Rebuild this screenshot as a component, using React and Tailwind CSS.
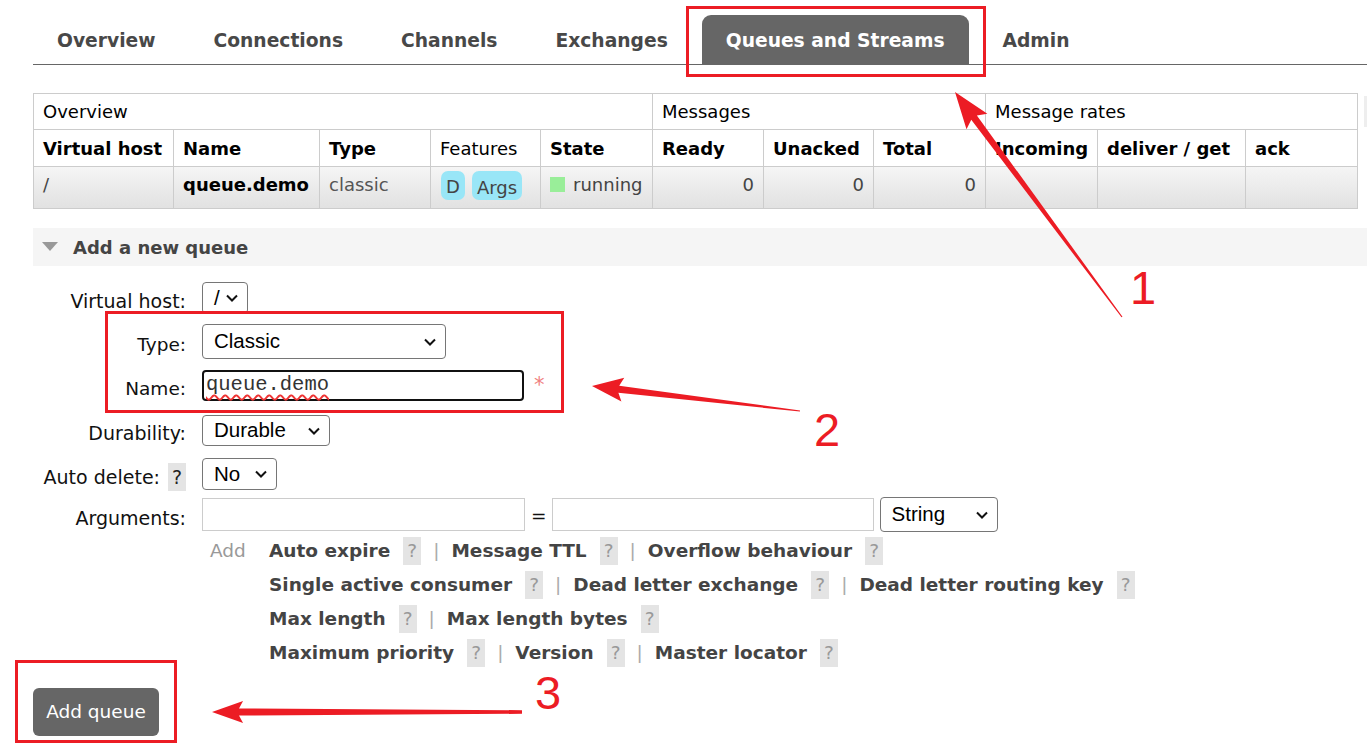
import React from "react";

const tabs = ["Overview", "Connections", "Channels", "Exchanges", "Queues and Streams", "Admin"];

const helpRows = [
  ["Auto expire", "Message TTL", "Overflow behaviour"],
  ["Single active consumer", "Dead letter exchange", "Dead letter routing key"],
  ["Max length", "Max length bytes"],
  ["Maximum priority", "Version", "Master locator"],
];

function Chevron() {
  return (
    <svg width="14" height="10" viewBox="0 0 14 10" className="shrink-0">
      <path d="M2 2.5 L7 7.5 L12 2.5" fill="none" stroke="#111" strokeWidth="2" />
    </svg>
  );
}

function Select({ value, w, h = "h-[32px]" }) {
  return (
    <div
      className={`${w} ${h} flex items-center justify-between pl-[11px] pr-[8px] border border-[#767676] rounded-[4px] bg-white text-[20.5px] text-black`}
      style={{ fontFamily: "'Liberation Sans', Arial, sans-serif" }}
    >
      <span>{value}</span>
      <Chevron />
    </div>
  );
}

function Help({ dark }) {
  return (
    <span
      className={`inline-flex items-center justify-center w-[18px] h-[28px] bg-[#e4e4e4] ${dark ? "text-[#222]" : "text-[#999]"} font-normal`}
    >
      ?
    </span>
  );
}

function arrowPoints(tx, ty, px, py, headLen, headW, tailW, shaftW) {
  const dx = px - tx;
  const dy = py - ty;
  const len = Math.hypot(dx, dy);
  const ux = dx / len;
  const uy = dy / len;
  const nx = -uy;
  const ny = ux;
  const bx = px - ux * headLen;
  const by = py - uy * headLen;
  const bbx = px - ux * headLen * 1.15;
  const bby = py - uy * headLen * 1.15;
  const pts = [
    [tx + nx * tailW, ty + ny * tailW],
    [bx + nx * shaftW, by + ny * shaftW],
    [bbx + nx * headW, bby + ny * headW],
    [px, py],
    [bbx - nx * headW, bby - ny * headW],
    [bx - nx * shaftW, by - ny * shaftW],
    [tx - nx * tailW, ty - ny * tailW],
  ];
  return pts.map((p) => p.join(",")).join(" ");
}

function Overlay() {
  return (
    <>
      <svg width="1367" height="745" className="absolute left-0 top-0 pointer-events-none">
        <rect x="687.5" y="7.5" width="297" height="68" fill="none" stroke="#ec1c24" strokeWidth="3" />
        <rect x="106.5" y="312.5" width="456" height="99" fill="none" stroke="#ec1c24" strokeWidth="3" />
        <rect x="16.5" y="661.5" width="159" height="80" fill="none" stroke="#ec1c24" strokeWidth="3" />
        <polygon points={arrowPoints(1122, 317, 955, 92, 32, 13, 0.6, 3.5)} fill="#ec1c24" />
        <polygon points={arrowPoints(800, 411, 592, 386, 27, 12, 0.6, 3.5)} fill="#ec1c24" />
        <polygon points={arrowPoints(522, 712, 212, 712, 27, 11, 1.8, 3.5)} fill="#ec1c24" />
      </svg>
      <div
        className="absolute left-[1130px] top-[264px] text-[47px] leading-none text-[#ec1c24]"
        style={{ fontFamily: "'Liberation Sans', Arial, sans-serif" }}
      >
        1
      </div>
      <div
        className="absolute left-[814px] top-[406px] text-[47px] leading-none text-[#ec1c24]"
        style={{ fontFamily: "'Liberation Sans', Arial, sans-serif" }}
      >
        2
      </div>
      <div
        className="absolute left-[535px] top-[669px] text-[47px] leading-none text-[#ec1c24]"
        style={{ fontFamily: "'Liberation Sans', Arial, sans-serif" }}
      >
        3
      </div>
    </>
  );
}

export default function App() {
  const cell = "border border-[#cccccc] px-[9px] text-left";
  const bodyCell = "border border-[#cccccc] px-[9px] text-left align-top pt-[4px]";
  return (
    <div
      className="relative w-[1367px] h-[745px] overflow-hidden bg-white text-[18px]"
      style={{ fontFamily: "'DejaVu Sans', Verdana, sans-serif" }}
    >
      {/* tabs */}
      <div className="ml-[33px] pt-[15px] flex border-b border-[#666]">
        {tabs.map((t) => (
          <div
            key={t}
            className={`h-[49px] px-[24px] mr-[10px] pt-[3px] flex items-center text-[18.7px] font-bold rounded-t-[9px] ${
              t === "Queues and Streams" ? "bg-[#666] text-white" : "text-[#484848]"
            }`}
          >
            {t}
          </div>
        ))}
      </div>

      {/* queue table */}
      <div className="flex mt-[28px] ml-[33px]">
        <table className="table-fixed border-collapse w-[1324px] text-black">
          <colgroup>
            {[140, 146, 111, 110, 112, 111, 110, 112, 112, 148, 112].map((w, i) => (
              <col key={i} style={{ width: w }} />
            ))}
          </colgroup>
          <thead>
            <tr className="h-[36px]">
              <th colSpan={5} className={`${cell} font-normal`}>Overview</th>
              <th colSpan={3} className={`${cell} font-normal`}>Messages</th>
              <th colSpan={3} className={`${cell} font-normal`}>Message rates</th>
            </tr>
            <tr className="h-[37px]">
              <th className={`${cell} font-bold`}>Virtual host</th>
              <th className={`${cell} font-bold`}>Name</th>
              <th className={`${cell} font-bold`}>Type</th>
              <th className={`${cell} font-normal`}>Features</th>
              <th className={`${cell} font-bold`}>State</th>
              <th className={`${cell} font-bold`}>Ready</th>
              <th className={`${cell} font-bold`}>Unacked</th>
              <th className={`${cell} font-bold`}>Total</th>
              <th className={`${cell} font-bold`}>Incoming</th>
              <th className={`${cell} font-bold`}>deliver / get</th>
              <th className={`${cell} font-bold`}>ack</th>
            </tr>
          </thead>
          <tbody>
            <tr className="h-[42px] bg-gradient-to-b from-[#f5f5f5] to-[#e1e1e1] text-[#444]">
              <td className={bodyCell}>/</td>
              <td className={`${bodyCell} font-bold text-black`}>queue.demo</td>
              <td className={`${bodyCell} text-[#555]`}>classic</td>
              <td className={bodyCell}>
                <div className="flex gap-[7px] pl-[1px]">
                  <span className="h-[29px] px-[5px] pt-[2px] flex items-center bg-[#99e6f7] rounded-[7px]">D</span>
                  <span className="h-[29px] px-[5px] pt-[3px] flex items-center bg-[#99e6f7] rounded-[7px]">Args</span>
                </div>
              </td>
              <td className={bodyCell}>
                <div className="flex items-center gap-[8px]">
                  <span className="w-[15px] h-[15px] bg-[#99ee99]" />
                  <span>running</span>
                </div>
              </td>
              <td className={`${bodyCell} text-right`}>0</td>
              <td className={`${bodyCell} text-right`}>0</td>
              <td className={`${bodyCell} text-right`}>0</td>
              <td className={bodyCell}></td>
              <td className={bodyCell}></td>
              <td className={bodyCell}></td>
            </tr>
          </tbody>
        </table>
        <div className="ml-[6px] mt-[3px] w-[6px] h-[31px] bg-[#eeeeee]" />
      </div>

      {/* add a new queue */}
      <div className="mt-[19px] ml-[33px] h-[38px] bg-[#f5f5f5] flex items-center">
        <svg width="16" height="10" viewBox="0 0 16 10" className="ml-[9px]">
          <polygon points="0,0 16,0 8,9" fill="#999" />
        </svg>
        <span className="ml-[15px] font-bold text-[#444]">Add a new queue</span>
      </div>

      <div className="text-[18.5px] text-[#111]">
        <div className="mt-[16px] flex items-center h-[32px]">
          <div className="w-[186px] text-right pt-[6px] text-[19px]">Virtual host:</div>
          <div className="ml-[16px]">
            <Select value="/" w="w-[46px]" />
          </div>
        </div>
        <div className="mt-[10px] flex items-center h-[35px]">
          <div className="w-[186px] text-right pt-[6px]">Type:</div>
          <div className="ml-[16px]">
            <Select value="Classic" w="w-[244px]" h="h-[35px]" />
          </div>
        </div>
        <div className="mt-[11px] flex items-center h-[31px]">
          <div className="w-[186px] text-right pt-[6px]">Name:</div>
          <div
            className="ml-[16px] w-[322px] h-[31px] border-2 border-[#111] rounded-[4px] pl-[2px] flex items-center text-[20.5px] text-[#333]"
            style={{ fontFamily: "'Liberation Mono', 'Courier New', monospace" }}
          >
            <span className="underline decoration-wavy decoration-[#e33] underline-offset-[4px]">queue.demo</span>
          </div>
          <span className="ml-[10px] text-[#f08080] text-[21px] leading-none">*</span>
        </div>
        <div className="mt-[14px] flex items-center h-[31px]">
          <div className="w-[186px] text-right pt-[6px] text-[19px]">Durability:</div>
          <div className="ml-[16px]">
            <Select value="Durable" w="w-[128px]" h="h-[31px]" />
          </div>
        </div>
        <div className="mt-[12px] flex items-center h-[32px]">
          <div className="w-[186px] flex justify-end items-center gap-[8px] pt-[6px] text-[19px]">
            <span>Auto delete:</span>
            <Help dark />
          </div>
          <div className="ml-[16px]">
            <Select value="No" w="w-[75px]" />
          </div>
        </div>
        <div className="mt-[8px] flex items-center h-[33px]">
          <div className="w-[186px] text-right pt-[8px] text-[19px]">Arguments:</div>
          <div className="ml-[16px] w-[323px] h-[33px] border border-[#cccccc]" />
          <span className="ml-[6px] mr-[5px] pt-[2px]">=</span>
          <div className="w-[322px] h-[33px] border border-[#cccccc]" />
          <div className="ml-[6px]">
            <Select value="String" w="w-[118px]" h="h-[35px]" />
          </div>
        </div>

        <div className="mt-[3px] ml-[210px] flex">
          <span className="text-[#999] pt-[3px] w-[59px]">Add</span>
          <div className="flex flex-col">
            {helpRows.map((row, i) => (
              <div key={i} className="h-[34px] flex items-center font-bold text-[#444]">
                {row.map((label, j) => (
                  <React.Fragment key={label}>
                    <span>{label}</span>
                    <span className="ml-[13px]">
                      <Help />
                    </span>
                    {j < row.length - 1 && (
                      <span className="mx-[12px] font-normal text-[#aaa]">|</span>
                    )}
                  </React.Fragment>
                ))}
              </div>
            ))}
          </div>
        </div>

        <button className="mt-[18px] ml-[33px] w-[126px] h-[48px] bg-[#666] rounded-[6px] text-white text-[18.5px]">
          Add queue
        </button>
      </div>

      <Overlay />
    </div>
  );
}
